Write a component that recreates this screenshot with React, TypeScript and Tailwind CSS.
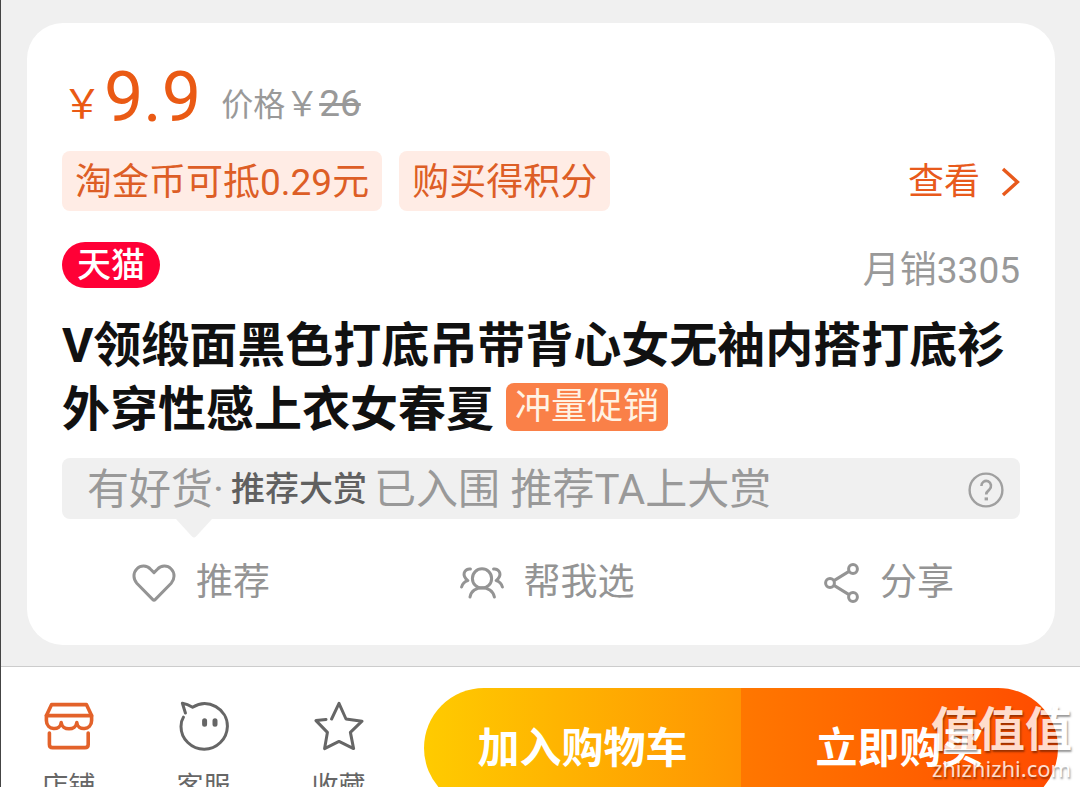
import React from "react";

type IconProps = { className?: string };

const ChevronIcon: React.FC<IconProps> = ({ className }) => (
  <svg viewBox="0 0 20 30" fill="none" stroke="currentColor" strokeWidth="3.4" className={className}>
    <path d="M3 2 L17.4 15 L3 28" />
  </svg>
);

const HelpIcon: React.FC<IconProps> = ({ className }) => (
  <svg viewBox="0 0 36 36" fill="none" stroke="currentColor" strokeWidth="2.4" className={className}>
    <circle cx="18" cy="18" r="16.4" />
    <path d="M13.4 14 a4.8 5 0 1 1 8 3.6 c-2 1.6 -3.2 2.4 -3.2 5" strokeWidth="2.6" />
    <path d="M16.6 25.4 h3.4 v3 h-3.4 z" fill="currentColor" stroke="none" />
  </svg>
);

const HeartIcon: React.FC<IconProps> = ({ className }) => (
  <svg
    viewBox="0 0 44 38"
    fill="none"
    stroke="currentColor"
    strokeWidth="3"
    strokeLinecap="round"
    strokeLinejoin="round"
    className={className}
  >
    <path d="M22 8.6 L18.6 5.2 C14.8 1 8.6 1 5 4.8 C1 8.8 1 15 4.8 19.2 L20.6 35.4 Q22 36.8 23.4 35.4 L39.2 19.2 C43 15 43 8.8 39 4.8 C35.4 1 29.2 1 25.4 5.2 Z" />
  </svg>
);

const FriendsIcon: React.FC<IconProps> = ({ className }) => (
  <svg
    viewBox="0 0 44 32"
    fill="none"
    stroke="currentColor"
    strokeWidth="3"
    strokeLinecap="round"
    strokeLinejoin="round"
    className={className}
  >
    <circle cx="22" cy="11.4" r="9.6" />
    <path d="M10 30 C12 17.6 32 17.6 34.4 30" />
    <path d="M10.4 2 C5.4 1.4 3 6 4.6 9.6 C5.4 11.4 6.4 12.4 7.8 13.6 C4.4 14.6 2.4 16.8 1.6 20" />
    <path d="M33.6 2 C38.6 1.4 41 6 39.4 9.6 C38.6 11.4 37.6 12.4 36.2 13.6 C39.6 14.6 41.6 16.8 42.4 20" />
  </svg>
);

const ShareIcon: React.FC<IconProps> = ({ className }) => (
  <svg viewBox="0 0 36 40" fill="none" stroke="currentColor" strokeWidth="3" className={className}>
    <circle cx="6" cy="20" r="4.4" />
    <circle cx="29" cy="6" r="4.4" />
    <circle cx="29" cy="34" r="4.4" />
    <path d="M10 17.6 L25 8.4 M10 22.4 L25 31.6" />
  </svg>
);

const ShopIcon: React.FC<IconProps> = ({ className }) => (
  <svg
    viewBox="0 0 50 50"
    fill="none"
    stroke="currentColor"
    strokeWidth="3.6"
    strokeLinecap="round"
    strokeLinejoin="round"
    className={className}
  >
    <path d="M7.6 3.6 H42.4 L47.6 14.6 H2.4 Z" />
    <path d="M2.4 14.6 V19.4 C2.4 29.8 16.4 29.8 17.2 21.6 C18 29.8 32 29.8 32.8 21.6 C33.6 29.8 47.6 29.8 47.6 19.4 V14.6" />
    <path d="M5.4 32 V43.4 Q5.4 46.6 8.6 46.6 H41 Q44.2 46.6 44.2 43.4 V32" />
  </svg>
);

const ServiceIcon: React.FC<IconProps> = ({ className }) => (
  <svg
    viewBox="0 0 50 50"
    fill="none"
    stroke="currentColor"
    strokeWidth="3"
    strokeLinecap="round"
    strokeLinejoin="round"
    className={className}
  >
    <path d="M6.4 12 L3.4 2.2 Q8.4 3 13.6 6.2 C29 -3.6 48.6 8 48.4 25.4 C48 38 37.8 48.2 25.2 48.2 C12.4 48.2 2 38 2 25.4 C2 22 2.6 19 4.4 16.2" />
    <path d="M25.6 19.8 V23.2 M36 19.8 V23.2" strokeWidth="5" />
  </svg>
);

const StarIcon: React.FC<IconProps> = ({ className }) => (
  <svg
    viewBox="0 0 50 50"
    fill="none"
    stroke="currentColor"
    strokeWidth="3"
    strokeLinecap="round"
    strokeLinejoin="round"
    className={className}
  >
    <path d="M17.6 18 L25 2.4 L32 18 L48 20.2 L36.4 31.4 L39.6 47.6 L25 40.4 L10.6 47.6 L13.4 31.4 L2 19.6 L12 18.4" />
  </svg>
);

const actions = [
  { label: "推荐", icon: <HeartIcon className="h-[38px] w-11" /> },
  { label: "帮我选", icon: <FriendsIcon className="h-8 w-11" /> },
  { label: "分享", icon: <ShareIcon className="h-10 w-9" /> },
];

const tabs = [
  { label: "店铺", icon: <ShopIcon className="h-[50px] w-[50px] text-[#e3622a]" /> },
  { label: "客服", icon: <ServiceIcon className="h-[50px] w-[50px]" /> },
  { label: "收藏", icon: <StarIcon className="h-[50px] w-[50px]" /> },
];

const coupons = ["淘金币可抵0.29元", "购买得积分"];

const ProductCard: React.FC = () => (
  <section className="mt-[23px] mr-[25px] ml-[26px] rounded-[36px] bg-white px-[35px] pt-10 pb-[35px]">
    <div className="flex items-end">
      <span className="text-[40px] leading-[52px] text-[#ea5a14]">￥</span>
      <span className="ml-0.5 text-[70px] leading-[68px] text-[#ea5a14]">9.9</span>
      <span className="ml-5 flex items-baseline text-[37px] leading-[54px] text-[#999]">
        <span className="text-[32px] leading-none">价格</span>
        <span className="text-[34px] leading-none">￥</span>
        <del>26</del>
      </span>
    </div>

    <div className="mt-5 flex items-center text-[37px] leading-[57px] text-[#dd5e26]">
      <div className="flex gap-[17px]">
        {coupons.map((coupon) => (
          <span key={coupon} className="rounded-lg bg-[#ffece5] px-[13px] pt-[3px]">
            {coupon}
          </span>
        ))}
      </div>
      <a href="#coupons" className="ml-auto flex items-center gap-5 pt-0.5 text-[36px] text-[#e85a1c]">
        查看
        <ChevronIcon className="h-[30px] w-5" />
      </a>
    </div>

    <div className="mt-[31px] flex items-start justify-between">
      <span className="rounded-full bg-[#ff0036] px-[15px] text-[34px] leading-[46px] font-medium text-white">
        天猫
      </span>
      <span className="text-[37px] leading-[58px] text-[#999]">月销3305</span>
    </div>

    <h1 className="mt-[14px] text-[48px] leading-[64px] font-bold text-[#111]">
      V领缎面黑色打底吊带背心女无袖内搭打底衫外穿性感上衣女春夏
      <span className="mb-3 ml-3 inline-block rounded-lg bg-[#fa8048] px-[9px] align-middle text-[36px] leading-[48px] font-normal text-[#fff3e4]">
        冲量促销
      </span>
    </h1>

    <div className="relative mt-[15px] flex items-center rounded-lg bg-[#f0f0f0] pt-0.5 pr-4 pl-[25px] text-[42px] leading-[59px] whitespace-pre text-[#999]">
      有好货·
      <strong className="mx-[7px] text-[34px] font-medium text-[#606060]">推荐大赏</strong>
      已入围 推荐TA上大赏
      <button type="button" aria-label="帮助" className="ml-auto text-[#a0a0a0]">
        <HelpIcon className="h-9 w-9" />
      </button>
      <svg viewBox="0 0 36 19" className="absolute top-full left-[114px] h-[19px] w-9 fill-[#f0f0f0]">
        <path d="M0 0 H36 L20 17.5 Q18 19.5 16 17.5 Z" />
      </svg>
    </div>

    <div className="mt-[37px] flex justify-between pr-[66px] pl-[70px]">
      {actions.map(({ label, icon }) => (
        <button
          key={label}
          type="button"
          className="flex items-center gap-5 text-[37px] leading-[54px] text-[#949494]"
        >
          {icon}
          {label}
        </button>
      ))}
    </div>
  </section>
);

const BottomBar: React.FC = () => (
  <footer className="relative mt-[21px] flex border-t border-[#ccc] bg-white pt-[21px] pr-[22px] pb-6">
    <nav className="flex">
      {tabs.map(({ label, icon }) => (
        <button
          key={label}
          type="button"
          className="flex w-[135px] flex-col items-center gap-5 pt-[13px] text-[27px] leading-8 text-[#666]"
        >
          {icon}
          {label}
        </button>
      ))}
    </nav>
    <div className="ml-[18px] flex h-[120px] flex-1 overflow-hidden rounded-full text-[42px] font-bold text-white">
      <button type="button" className="flex-1 bg-linear-to-r from-[#ffcb00] to-[#ff9402]">
        加入购物车
      </button>
      <button type="button" className="flex-1 bg-linear-to-r from-[#ff7700] to-[#ff4a00]">
        立即购买
      </button>
    </div>

    <div className="pointer-events-none absolute top-[38px] right-2 flex flex-col items-center text-white opacity-80 text-shadow-[1px_2px_2px_rgb(0_0_0/0.5)]">
      <span className="text-[47px] leading-[50px] font-bold">值值值</span>
      <span className="font-['Noto_Sans'] text-[22px] leading-[26px]">zhizhizhi.com</span>
    </div>
  </footer>
);

const App: React.FC = () => {
  return (
    <main className="h-screen overflow-hidden border-l border-[#444] bg-[#f0f0f0] font-[Roboto,'Noto_Sans_CJK_SC',sans-serif]">
      <ProductCard />
      <BottomBar />
    </main>
  );
};

export default App;
